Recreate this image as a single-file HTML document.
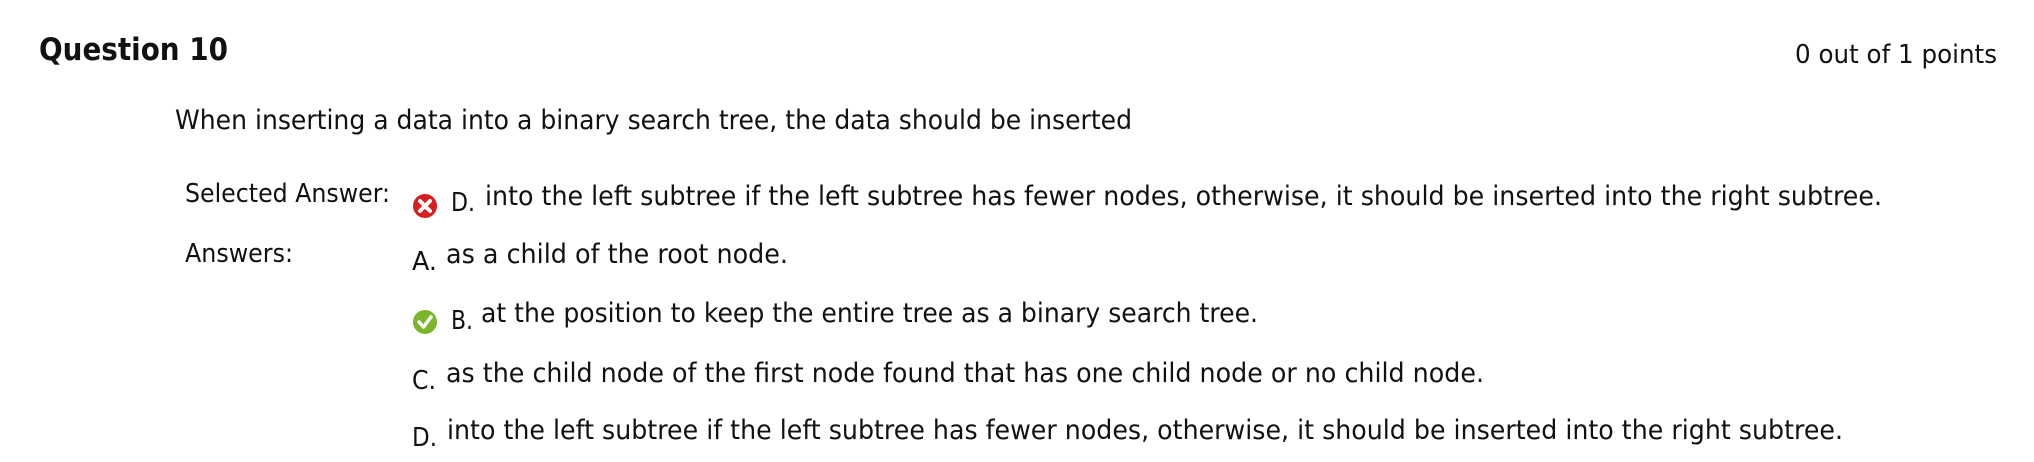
<!DOCTYPE html>
<html><head><meta charset="utf-8"><style>
html,body{margin:0;padding:0;background:#fff;width:2034px;height:462px;overflow:hidden}
svg{display:block}
text{font-family:"DejaVu Sans","Liberation Sans",sans-serif;fill:#111}
</style></head><body>
<svg width="2034" height="462" viewBox="0 0 2034 462" xmlns="http://www.w3.org/2000/svg">
<text x="39" y="60" font-size="31" font-weight="bold" textLength="189" lengthAdjust="spacingAndGlyphs">Question 10</text>
<text x="1795" y="63" font-size="26" textLength="202" lengthAdjust="spacingAndGlyphs">0 out of 1 points</text>
<text x="175" y="129" font-size="27" textLength="957" lengthAdjust="spacingAndGlyphs">When inserting a data into a binary search tree, the data should be inserted</text>
<text x="185" y="202" font-size="26" textLength="205" lengthAdjust="spacingAndGlyphs">Selected Answer:</text>
<g>
<circle cx="425" cy="206" r="12" fill="#d81e1e"/>
<path d="M420 201 L430 211 M430 201 L420 211" stroke="#fff" stroke-width="4" stroke-linecap="round"/>
</g>
<text x="451" y="211" font-size="26" textLength="24" lengthAdjust="spacingAndGlyphs">D.</text>
<text x="485" y="205" font-size="27" textLength="1397" lengthAdjust="spacingAndGlyphs">into the left subtree if the left subtree has fewer nodes, otherwise, it should be inserted into the right subtree.</text>
<text x="185" y="262" font-size="26" textLength="108" lengthAdjust="spacingAndGlyphs">Answers:</text>
<text x="412" y="270" font-size="26" textLength="25" lengthAdjust="spacingAndGlyphs">A.</text>
<text x="446" y="263" font-size="27" textLength="342" lengthAdjust="spacingAndGlyphs">as a child of the root node.</text>
<g>
<circle cx="425" cy="322" r="12" fill="#7cb52a"/>
<path d="M419 322 L423.5 327 L431 317" stroke="#fff" stroke-width="3.5" fill="none" stroke-linecap="round" stroke-linejoin="round"/>
</g>
<text x="451" y="329" font-size="26" textLength="22" lengthAdjust="spacingAndGlyphs">B.</text>
<text x="481" y="322" font-size="27" textLength="777" lengthAdjust="spacingAndGlyphs">at the position to keep the entire tree as a binary search tree.</text>
<text x="412" y="389" font-size="26" textLength="24" lengthAdjust="spacingAndGlyphs">C.</text>
<text x="446" y="382" font-size="27" textLength="1038" lengthAdjust="spacingAndGlyphs">as the child node of the first node found that has one child node or no child node.</text>
<text x="412" y="446" font-size="26" textLength="25" lengthAdjust="spacingAndGlyphs">D.</text>
<text x="447" y="439" font-size="27" textLength="1396" lengthAdjust="spacingAndGlyphs">into the left subtree if the left subtree has fewer nodes, otherwise, it should be inserted into the right subtree.</text>
</svg>
</body></html>
